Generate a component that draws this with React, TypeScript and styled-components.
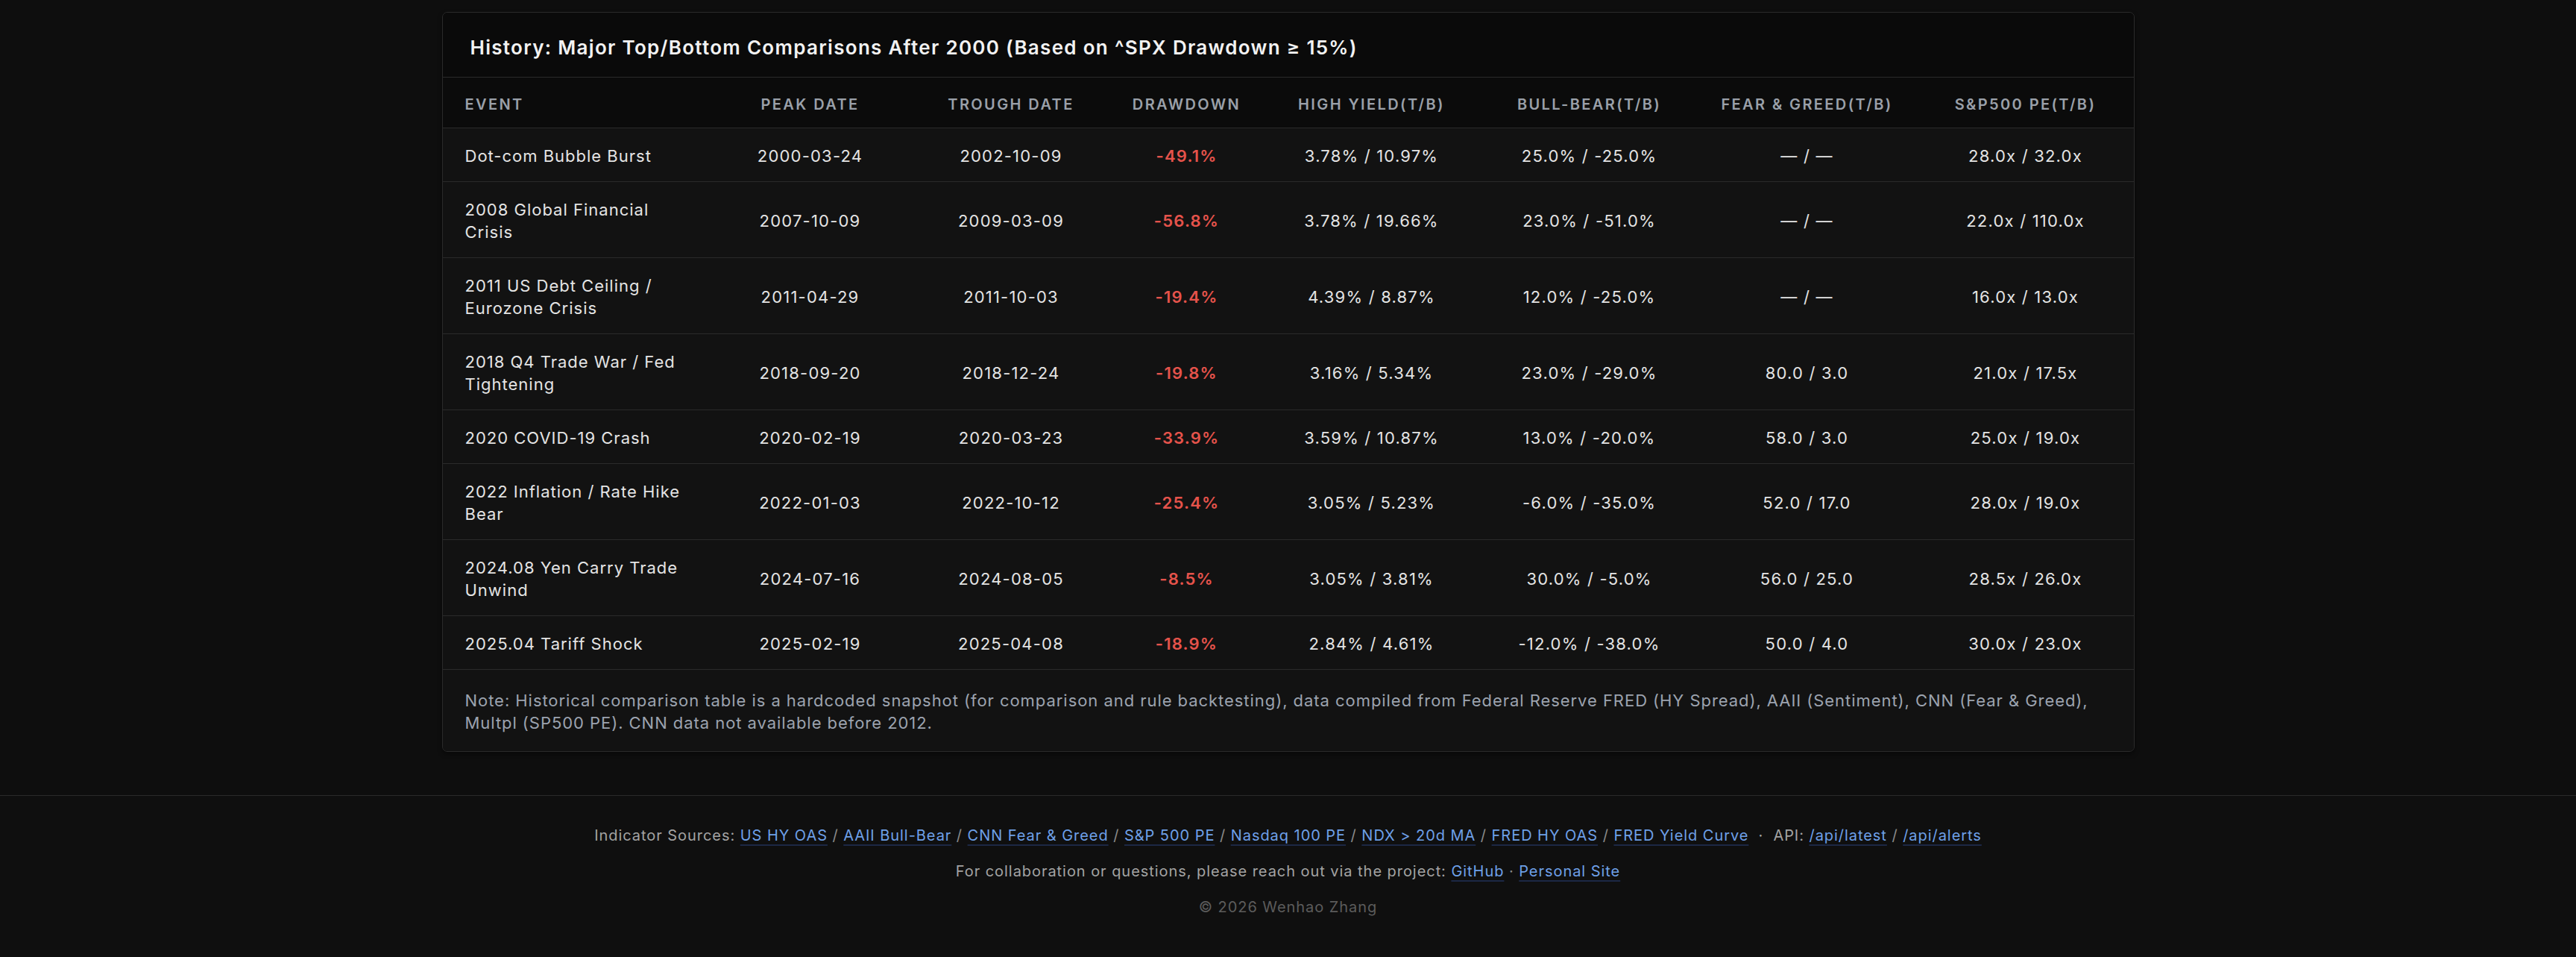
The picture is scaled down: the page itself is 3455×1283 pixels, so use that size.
import React from "react";
import styled, { createGlobalStyle } from "styled-components";

const GlobalStyle = createGlobalStyle`
  html, body {
    margin: 0;
    padding: 0;
    background: #0e0e0e;
  }
  body {
    font-family: Inter, "Noto Sans", "Liberation Sans", sans-serif;
    color: #e6e6e6;
  }
`;

const Page = styled.div`
  display: flex;
  flex-direction: column;
  min-height: 1283px;
  padding-top: 16px;
  box-sizing: border-box;
`;

const Panel = styled.section`
  width: 2270px;
  margin: 0 auto;
  box-sizing: border-box;
  border: 1px solid #2a2a2a;
  border-radius: 7px;
  overflow: hidden;
  background: #121212;
  box-shadow: 0 3px 6px rgba(0, 0, 0, 0.45);
`;

const PanelTitle = styled.h2`
  margin: 0;
  padding: 30px 37px 22px;
  font-size: 26px;
  line-height: 34px;
  font-weight: 600;
  letter-spacing: 1.3px;
  color: #f2f2f2;
  background: #0a0a0a;
  border-bottom: 1px solid #2a2a2a;
`;

const Table = styled.table`
  width: 100%;
  table-layout: fixed;
  border-collapse: collapse;
`;

const HeadRow = styled.tr`
  background: #0b0b0b;
  border-bottom: 1px solid #2a2a2a;
`;

const HeadCell = styled.th<{ $left?: boolean }>`
  padding: 22px 4px 17px;
  font-size: 20px;
  line-height: 28px;
  font-weight: 600;
  letter-spacing: 2.4px;
  text-transform: uppercase;
  color: #9aa0a9;
  text-align: ${(p) => (p.$left ? "left" : "center")};
  white-space: nowrap;
  &:first-child {
    padding-left: 30px;
  }
`;

const BodyRow = styled.tr`
  background: #121212;
  border-bottom: 1px solid #2a2a2a;
`;

const Cell = styled.td`
  padding: 22px 4px 19px;
  font-size: 22px;
  line-height: 30px;
  letter-spacing: 1.2px;
  color: #e4e4e4;
  text-align: center;
  vertical-align: middle;
  white-space: nowrap;
`;

const EventCell = styled(Cell)`
  text-align: left;
  white-space: normal;
  letter-spacing: 1px;
  padding-left: 30px;
  padding-right: 30px;
`;

const DrawdownCell = styled(Cell)`
  color: #e5534b;
  font-weight: 600;
`;

const Note = styled.p`
  margin: 0;
  padding: 26px 30px 23px;
  font-size: 22px;
  line-height: 30px;
  letter-spacing: 0.95px;
  color: #9ca3af;
  background: #121212;
`;

const Footer = styled.footer`
  margin-top: 58px;
  border-top: 1px solid #2a2a2a;
  padding: 39px 0 40px;
  display: flex;
  flex-direction: column;
  align-items: center;
  gap: 20px;
  background: #0f0f0f;
  flex: 1;
`;

const FooterLine = styled.div<{ $dim?: boolean }>`
  font-size: 20px;
  line-height: 28px;
  letter-spacing: 0.95px;
  color: ${(p) => (p.$dim ? "#5c5c5c" : "#a3a3a3")};
  text-align: center;
  white-space: pre;
`;

const Link = styled.a`
  color: #6ea0e8;
  text-decoration: underline;
  text-decoration-color: #1c2845;
  text-decoration-thickness: 2px;
  text-underline-offset: 5px;
`;

const Sep = styled.span`
  color: #8a8a8a;
`;

type Row = {
  event: string;
  peak: string;
  trough: string;
  dd: string;
  hy: string;
  bb: string;
  fg: string;
  pe: string;
};

const rows: Row[] = [
  { event: "Dot-com Bubble Burst", peak: "2000-03-24", trough: "2002-10-09", dd: "-49.1%", hy: "3.78% / 10.97%", bb: "25.0% / -25.0%", fg: "— / —", pe: "28.0x / 32.0x" },
  { event: "2008 Global Financial Crisis", peak: "2007-10-09", trough: "2009-03-09", dd: "-56.8%", hy: "3.78% / 19.66%", bb: "23.0% / -51.0%", fg: "— / —", pe: "22.0x / 110.0x" },
  { event: "2011 US Debt Ceiling / Eurozone Crisis", peak: "2011-04-29", trough: "2011-10-03", dd: "-19.4%", hy: "4.39% / 8.87%", bb: "12.0% / -25.0%", fg: "— / —", pe: "16.0x / 13.0x" },
  { event: "2018 Q4 Trade War / Fed Tightening", peak: "2018-09-20", trough: "2018-12-24", dd: "-19.8%", hy: "3.16% / 5.34%", bb: "23.0% / -29.0%", fg: "80.0 / 3.0", pe: "21.0x / 17.5x" },
  { event: "2020 COVID-19 Crash", peak: "2020-02-19", trough: "2020-03-23", dd: "-33.9%", hy: "3.59% / 10.87%", bb: "13.0% / -20.0%", fg: "58.0 / 3.0", pe: "25.0x / 19.0x" },
  { event: "2022 Inflation / Rate Hike Bear", peak: "2022-01-03", trough: "2022-10-12", dd: "-25.4%", hy: "3.05% / 5.23%", bb: "-6.0% / -35.0%", fg: "52.0 / 17.0", pe: "28.0x / 19.0x" },
  { event: "2024.08 Yen Carry Trade Unwind", peak: "2024-07-16", trough: "2024-08-05", dd: "-8.5%", hy: "3.05% / 3.81%", bb: "30.0% / -5.0%", fg: "56.0 / 25.0", pe: "28.5x / 26.0x" },
  { event: "2025.04 Tariff Shock", peak: "2025-02-19", trough: "2025-04-08", dd: "-18.9%", hy: "2.84% / 4.61%", bb: "-12.0% / -38.0%", fg: "50.0 / 4.0", pe: "30.0x / 23.0x" },
];

const colWidths = [359, 268, 271, 200, 296, 288, 296, 290];

const headers = [
  "Event",
  "Peak Date",
  "Trough Date",
  "Drawdown",
  "High Yield(T/B)",
  "Bull-Bear(T/B)",
  "Fear & Greed(T/B)",
  "S&P500 PE(T/B)",
];

const sources = [
  "US HY OAS",
  "AAII Bull-Bear",
  "CNN Fear & Greed",
  "S&P 500 PE",
  "Nasdaq 100 PE",
  "NDX > 20d MA",
  "FRED HY OAS",
  "FRED Yield Curve",
];

export default function App() {
  return (
    <>
      <GlobalStyle />
      <Page>
        <Panel>
          <PanelTitle>
            History: Major Top/Bottom Comparisons After 2000 (Based on ^SPX Drawdown ≥ 15%)
          </PanelTitle>
          <Table>
            <colgroup>
              {colWidths.map((w, i) => (
                <col key={i} style={{ width: w }} />
              ))}
            </colgroup>
            <thead>
              <HeadRow>
                {headers.map((h, i) => (
                  <HeadCell key={h} $left={i === 0}>
                    {h}
                  </HeadCell>
                ))}
              </HeadRow>
            </thead>
            <tbody>
              {rows.map((r) => (
                <BodyRow key={r.event}>
                  <EventCell>{r.event}</EventCell>
                  <Cell>{r.peak}</Cell>
                  <Cell>{r.trough}</Cell>
                  <DrawdownCell>{r.dd}</DrawdownCell>
                  <Cell>{r.hy}</Cell>
                  <Cell>{r.bb}</Cell>
                  <Cell>{r.fg}</Cell>
                  <Cell>{r.pe}</Cell>
                </BodyRow>
              ))}
            </tbody>
          </Table>
          <Note>
            Note: Historical comparison table is a hardcoded snapshot (for comparison and rule
            backtesting), data compiled from Federal Reserve FRED (HY Spread), AAII (Sentiment), CNN
            (Fear &amp; Greed), Multpl (SP500 PE). CNN data not available before 2012.
          </Note>
        </Panel>
        <Footer>
          <FooterLine>
            {"Indicator Sources: "}
            {sources.map((s, i) => (
              <React.Fragment key={s}>
                {i > 0 && <Sep>{" / "}</Sep>}
                <Link href="#">{s}</Link>
              </React.Fragment>
            ))}
            {"  ·  API: "}
            <Link href="#">/api/latest</Link>
            <Sep>{" / "}</Sep>
            <Link href="#">/api/alerts</Link>
          </FooterLine>
          <FooterLine>
            {"For collaboration or questions, please reach out via the project: "}
            <Link href="#">GitHub</Link>
            <Sep>{" · "}</Sep>
            <Link href="#">Personal Site</Link>
          </FooterLine>
          <FooterLine $dim>© 2026 Wenhao Zhang</FooterLine>
        </Footer>
      </Page>
    </>
  );
}
